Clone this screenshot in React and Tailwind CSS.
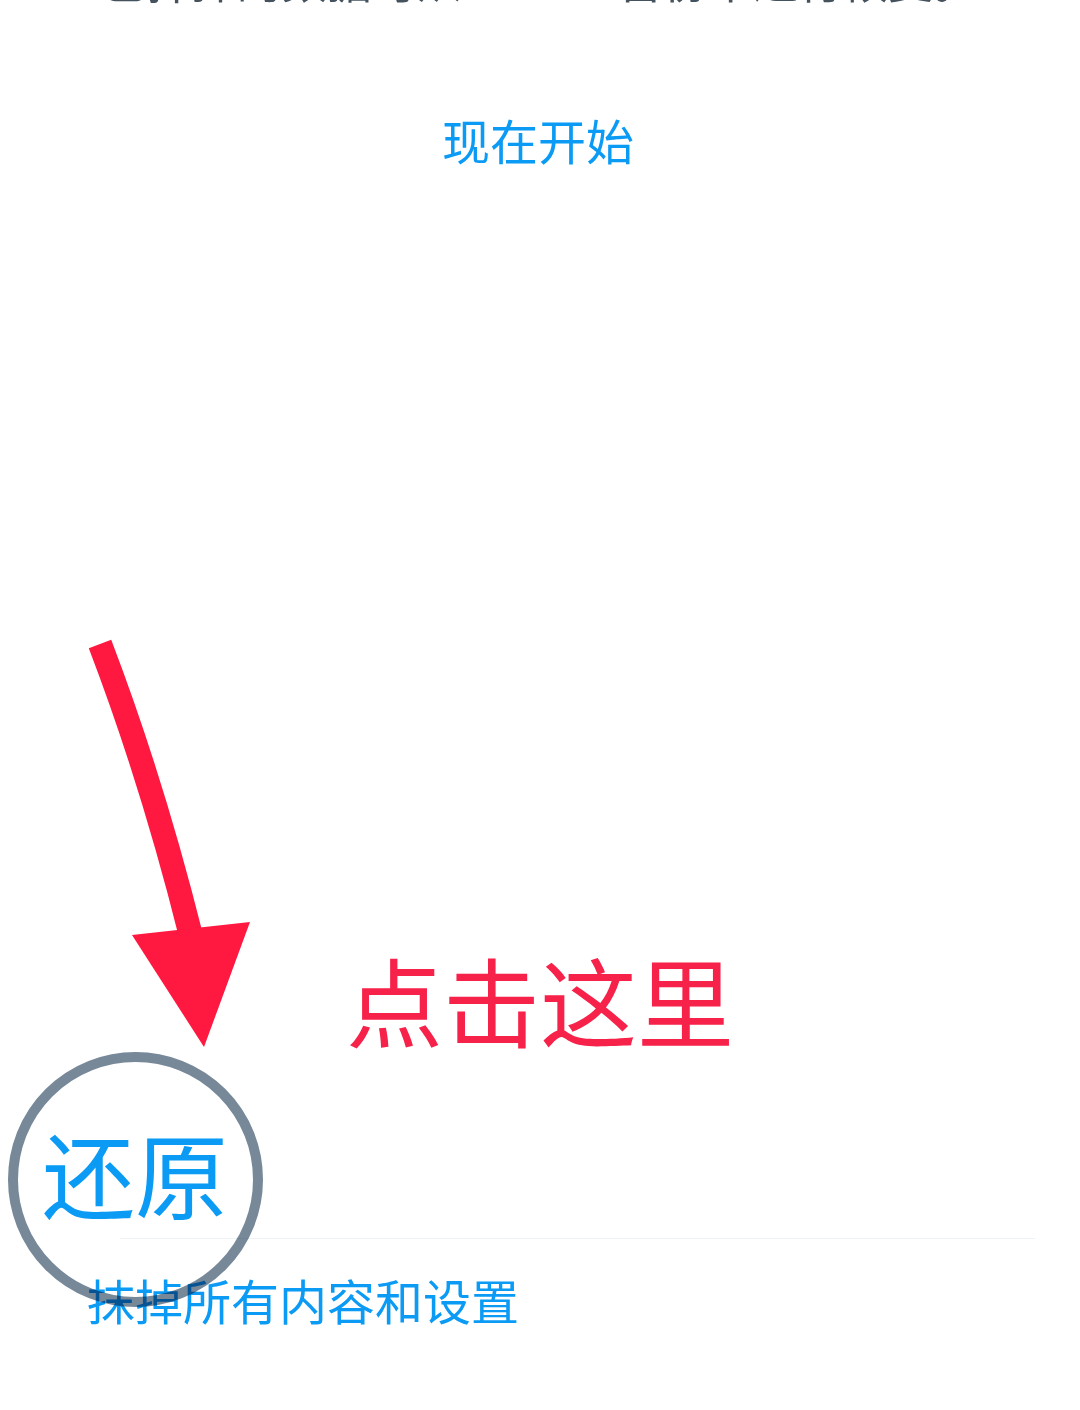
import React from 'react';

const cjk = { fontFamily: '"Noto Sans CJK SC", "Noto Sans", sans-serif' };

function Arrow() {
  return (
    <svg className="absolute left-0 top-0 pointer-events-none" width="1080" height="1410" viewBox="0 0 1080 1410">
      <path d="M100,644 Q152,780 191,936" fill="none" stroke="#ff1840" strokeWidth="24" />
      <polygon points="132,935 250,922 204,1047" fill="#ff1840" />
    </svg>
  );
}

export default function App() {
  return (
    <div className="relative w-[1080px] h-[1410px] bg-white overflow-hidden" style={cjk}>
      <div className="flex flex-col">
        <div className="h-[4px] overflow-hidden">
          <p className="-mt-[43px] text-center text-[45px] leading-none text-[#44525e]">
            已抹掉的数据可从 iCloud 备份中进行恢复。
          </p>
        </div>

        <p className="mt-[111px] text-center text-[48px] leading-none text-[#0b9bf5] -ml-[4px]">现在开始</p>

        <p className="mt-[786px] text-center text-[97px] leading-none text-[#f72249]">点击这里</p>

        <p className="mt-[79px] ml-[42px] text-[93px] leading-none text-[#0b9bf5]">还原</p>

        <div className="mt-[20px] ml-[120px] mr-[45px] border-t border-[#edf3f7]"></div>

        <p className="mt-[36px] ml-[87px] text-[48px] leading-none text-[#0b9bf5]">抹掉所有内容和设置</p>
      </div>

      <Arrow />
      <div className="absolute left-[8px] top-[1052px] w-[255px] h-[255px] rounded-full border-[10px] border-[#778899] mix-blend-multiply"></div>
    </div>
  );
}
